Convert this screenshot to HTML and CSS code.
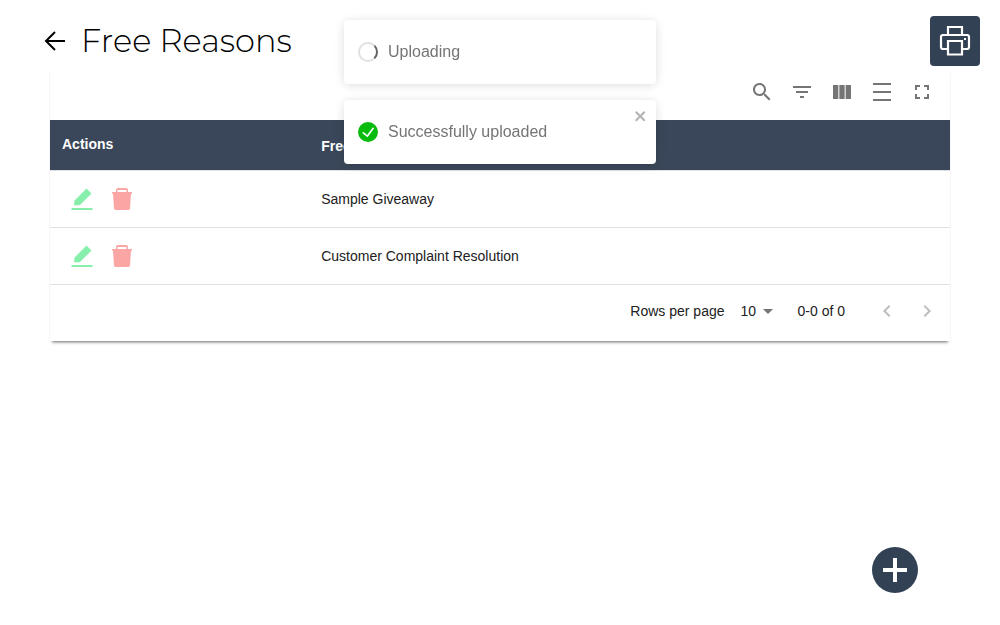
FILE: index.html
```html
<!DOCTYPE html>
<html lang="en">
<head>
<meta charset="utf-8">
<meta name="viewport" content="width=device-width, initial-scale=1">
<title>Free Reasons</title>
<link rel="stylesheet" href="styles.css">
</head>
<body>
<main class="page">
  <header class="page-header">
    <a class="back" href="#" aria-label="Back">
      <svg class="icon" viewBox="0 0 24 24" fill="none" stroke="currentColor" stroke-width="2"><path d="M22 12H3M12 3l-9 9 9 9"/></svg>
    </a>
    <h1 class="title">Free Reasons</h1>
    <button class="print" type="button" aria-label="Print">
      <svg class="print-icon" viewBox="0 0 32 32" fill="none" stroke="currentColor" stroke-width="2.200">
        <path d="M9 10V2h14v8M9 24H4a2 2 0 0 1-2-2V12a2 2 0 0 1 2-2h24a2 2 0 0 1 2 2v10a2 2 0 0 1-2 2h-5"/>
        <path d="M9 16h14v13.500H9z"/>
        <rect x="25" y="13" width="2" height="2" fill="currentColor" stroke="none"/>
      </svg>
    </button>
  </header>

  <section class="card">
    <div class="toolbar">
      <button class="icon-button" type="button" aria-label="Search"><svg class="icon" viewBox="0 0 24 24" fill="currentColor"><path d="M15.5 14h-.79l-.28-.27C15.41 12.59 16 11.11 16 9.5 16 5.91 13.09 3 9.5 3S3 5.91 3 9.5 5.91 16 9.5 16c1.61 0 3.09-.59 4.23-1.57l.27.28v.79l5 4.99L20.49 19l-4.99-5zm-6 0C7.01 14 5 11.99 5 9.5S7.01 5 9.5 5 14 7.01 14 9.5 11.99 14 9.5 14z"/></svg></button>
      <button class="icon-button" type="button" aria-label="Show filters"><svg class="icon" viewBox="0 0 24 24" fill="currentColor"><path d="M10 18h4v-2h-4v2zM3 6v2h18V6H3zm3 7h12v-2H6v2z"/></svg></button>
      <button class="icon-button" type="button" aria-label="Show columns"><svg class="icon" viewBox="0 0 24 24" fill="currentColor"><path d="M3 5h5.330v14H3zM9.330 5h5.330v14H9.330zM15.670 5H21v14h-5.330z"/></svg></button>
      <button class="icon-button" type="button" aria-label="Row density"><svg class="icon" viewBox="0 0 24 24" fill="currentColor"><path d="M3 3h18v2H3zM3 11h18v2H3zM3 19h18v2H3z"/></svg></button>
      <button class="icon-button" type="button" aria-label="Full screen"><svg class="icon" viewBox="0 0 24 24" fill="currentColor"><path d="M7 14H5v5h5v-2H7v-3zm-2-4h2V7h3V5H5v5zm12 7h-3v2h5v-5h-2v3zM14 5v2h3v3h2V5h-5z"/></svg></button>
    </div>

    <table class="table">
      <thead>
        <tr><th class="col-actions" scope="col">Actions</th><th scope="col">Free Reason</th></tr>
      </thead>
      <tbody>
        <tr>
          <td>
            <div class="actions">
              <button class="icon-button edit" type="button" aria-label="Edit Sample Giveaway"><svg class="icon" viewBox="0 0 24 24" fill="currentColor"><path d="M4 18.300L4.500 13.500 16.500 1.500 21.500 6.500 10 18 8.500 18.300zM2.300 21h19.400a1 1 0 0 1 0 2H2.300a1 1 0 0 1 0-2z"/></svg></button>
              <button class="icon-button delete" type="button" aria-label="Delete Sample Giveaway"><svg class="icon" viewBox="0 0 24 24" fill="currentColor" fill-rule="evenodd"><path d="M6 5V3a2 2 0 0 1 2-2h8a2 2 0 0 1 2 2v2h4v1.500h-1L20 21.500a2 2 0 0 1-2 1.500H6a2 2 0 0 1-2-1.500L3 6.500H2V5zM7.500 3v2h9V3z"/></svg></button>
            </div>
          </td>
          <td>Sample Giveaway</td>
        </tr>
        <tr>
          <td>
            <div class="actions">
              <button class="icon-button edit" type="button" aria-label="Edit Customer Complaint Resolution"><svg class="icon" viewBox="0 0 24 24" fill="currentColor"><path d="M4 18.300L4.500 13.500 16.500 1.500 21.500 6.500 10 18 8.500 18.300zM2.300 21h19.400a1 1 0 0 1 0 2H2.300a1 1 0 0 1 0-2z"/></svg></button>
              <button class="icon-button delete" type="button" aria-label="Delete Customer Complaint Resolution"><svg class="icon" viewBox="0 0 24 24" fill="currentColor" fill-rule="evenodd"><path d="M6 5V3a2 2 0 0 1 2-2h8a2 2 0 0 1 2 2v2h4v1.500h-1L20 21.500a2 2 0 0 1-2 1.500H6a2 2 0 0 1-2-1.500L3 6.500H2V5zM7.500 3v2h9V3z"/></svg></button>
            </div>
          </td>
          <td>Customer Complaint Resolution</td>
        </tr>
      </tbody>
    </table>

    <footer class="pagination">
      <label for="page-size">Rows per page</label>
      <div class="page-size">
        <select id="page-size"><option>10</option><option>25</option><option>50</option></select>
        <svg class="caret" viewBox="0 0 10 5" fill="currentColor"><path d="M0 0h10L5 5z"/></svg>
      </div>
      <span class="range">0-0 of 0</span>
      <div class="pager">
        <button class="icon-button" type="button" disabled aria-label="Previous page"><svg class="icon" viewBox="0 0 24 24" fill="currentColor"><path d="M15.410 7.410L14 6l-6 6 6 6 1.410-1.410L10.830 12z"/></svg></button>
        <button class="icon-button" type="button" disabled aria-label="Next page"><svg class="icon" viewBox="0 0 24 24" fill="currentColor"><path d="M10 6L8.590 7.410 13.170 12l-4.580 4.590L10 18l6-6z"/></svg></button>
      </div>
    </footer>
  </section>
</main>

<button class="add" type="button" aria-label="Add free reason"><svg class="icon" viewBox="0 0 24 24" fill="none" stroke="currentColor" stroke-width="4"><path d="M12 0v24M0 12h24"/></svg></button>

<div class="toasts">
  <div class="toast" role="status"><span class="spinner"></span><span>Uploading</span></div>
  <div class="toast" role="status">
    <svg class="toast-icon" viewBox="0 0 24 24" fill="currentColor"><path d="M12 0a12 12 0 1 0 12 12A12.014 12.014 0 0 0 12 0zm6.927 8.200l-6.845 9.289a1.011 1.011 0 0 1-1.430.188l-4.888-3.908a1 1 0 1 1 1.250-1.562l4.076 3.261 6.227-8.451a1 1 0 1 1 1.610 1.183z"/></svg>
    <span>Successfully uploaded</span>
    <button class="toast-close" type="button" aria-label="Close"><svg viewBox="0 0 14 16" fill="currentColor" fill-rule="evenodd"><path d="M7.710 8.230l3.750 3.750-1.480 1.480-3.750-3.750-3.750 3.750L1 11.980l3.750-3.750L1 4.480 2.480 3l3.750 3.750L9.980 3l1.480 1.480-3.750 3.750z"/></svg></button>
  </div>
</div>
</body>
</html>
```

FILE: styles.css
```css
* { box-sizing: border-box; }

body {
  margin: 0;
  background: #fff;
  color: #212121;
  font: 14px/20px "Liberation Sans", Arial, sans-serif;
}

button {
  display: inline-flex;
  align-items: center;
  justify-content: center;
  padding: 0;
  border: 0;
  background: none;
  color: inherit;
  cursor: pointer;
}

.icon { display: block; width: 24px; height: 24px; }

.page { padding: 16px 20px 20px 43px; }

.page-header { display: flex; align-items: center; gap: 14px; }
.back { color: #000; }
.title {
  flex: 1;
  margin: 0;
  color: #000;
  font: 300 32px/40px Montserrat, Inter, sans-serif;
}
.print {
  width: 50px;
  height: 50px;
  border-radius: 4px;
  background: #334155;
  color: #fff;
}
.print-icon { width: 32px; height: 32px; }

.card {
  margin: 0 30px 0 7px;
  box-shadow: 0 3px 3px -2px rgba(0, 0, 0, .6);
}

.toolbar {
  display: flex;
  justify-content: flex-end;
  padding: 6px 8px 8px;
  color: #757575;
}
.icon-button { width: 40px; height: 40px; }

.table { width: 100%; border-collapse: separate; border-spacing: 0; table-layout: fixed; }
.table th, .table td {
  padding: 8px 12px;
  border-bottom: 1px solid #e0e0e0;
  text-align: left;
  vertical-align: middle;
}
.table th {
  height: 51px;
  padding-top: 10px;
  background: #3a475a;
  color: #fff;
  font-weight: 700;
}
.table .col-actions { width: 28.8%; padding-bottom: 12px; }
.actions { display: flex; }
.edit { color: #86efac; }
.delete { color: #fca5a5; }

.pagination {
  display: flex;
  align-items: center;
  justify-content: flex-end;
  padding: 6px 3px 10px;
}
.page-size {
  display: flex;
  align-items: center;
  margin: 0 25px 0 16px;
  color: #757575;
}
.page-size select {
  appearance: none;
  padding: 0;
  border: 0;
  background: none;
  color: #212121;
  font: inherit;
  width: 22px;
}
.caret { width: 10px; height: 5px; }
.range { margin-right: 22px; }
.pager { display: flex; color: #bdbdbd; }

.add {
  position: fixed;
  right: 82px;
  bottom: 32px;
  width: 46px;
  height: 46px;
  border-radius: 50%;
  background: #334155;
  color: #fff;
}

.toasts {
  position: fixed;
  top: 20px;
  left: 50%;
  display: grid;
  gap: 16px;
  width: 312px;
  transform: translateX(-50%);
}
.toast {
  position: relative;
  display: flex;
  align-items: center;
  gap: 10px;
  min-height: 64px;
  padding: 8px 14px;
  border-radius: 4px;
  background: #fff;
  color: #757575;
  font-size: 16px;
  box-shadow: 0 1px 10px rgba(0, 0, 0, .1), 0 2px 15px rgba(0, 0, 0, .05);
}
.spinner {
  width: 20px;
  height: 20px;
  border: 2px solid #e0e0e0;
  border-right-color: #616161;
  border-radius: 50%;
}
.toast-icon { width: 20px; height: 20px; color: #07bc0c; }
.toast-close {
  position: absolute;
  top: 8px;
  right: 8px;
  width: 14px;
  height: 16px;
  color: #b3b3b3;
}
.toast-close svg { width: 14px; height: 16px; }
```
